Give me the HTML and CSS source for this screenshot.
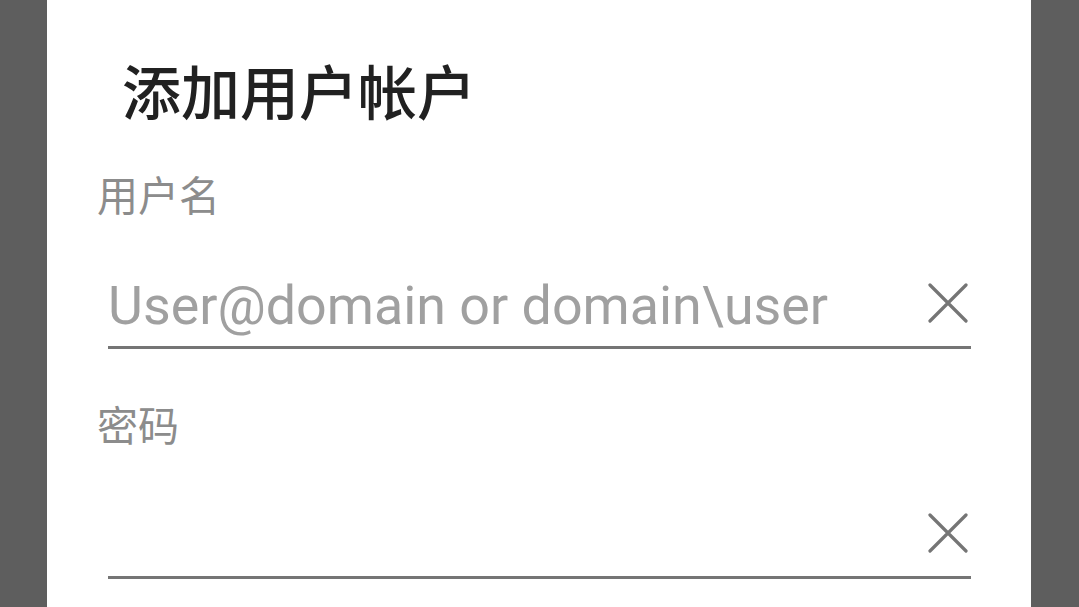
FILE: index.html
```html
<!DOCTYPE html>
<html lang="zh-CN">
<head>
    <meta charset="UTF-8">
    <meta name="viewport" content="width=device-width, initial-scale=1.0">
    <title>添加用户帐户</title>
    <link rel="stylesheet" href="styles.css">
</head>
<body>
    <div class="dialog">
        <h2 class="title">添加用户帐户</h2>

        <label class="label" for="username">用户名</label>
        <div class="input-row">
            <input type="text" id="username" placeholder="User@domain or domain\user">
            <span class="clear">
                <svg width="40" height="40" viewBox="0 0 40 40"><path d="M2 2 L38 38 M38 2 L2 38" stroke="#757575" stroke-width="3.2" stroke-linecap="round" fill="none"/></svg>
            </span>
        </div>

        <label class="label second" for="password">密码</label>
        <div class="input-row">
            <input type="password" id="password">
            <span class="clear">
                <svg width="40" height="40" viewBox="0 0 40 40"><path d="M2 2 L38 38 M38 2 L2 38" stroke="#757575" stroke-width="3.2" stroke-linecap="round" fill="none"/></svg>
            </span>
        </div>
    </div>
</body>
</html>
```

FILE: styles.css
```css
body {
    font-family: Roboto, "Noto Sans CJK SC", sans-serif;
    background-color: #5e5e5e;
    margin: 0;
    height: 100vh;
    overflow: hidden;
}

.dialog {
    background: #fff;
    margin: 0 48px 0 47px;
    height: 100%;
    padding: 0 60px 0 50px;
    box-sizing: border-box;
}

.title {
    margin: 0;
    padding: 57px 0 0 25px;
    font-size: 59px;
    font-weight: 500;
    line-height: 76px;
    color: #212121;
}

.label {
    display: block;
    font-size: 41px;
    line-height: 56px;
    color: #8c8c8c;
    margin-top: 36px;
}

.label.second {
    margin-top: 50px;
}

.input-row {
    display: flex;
    align-items: center;
    margin-left: 11px;
    padding-top: 34px;
    border-bottom: 3px solid #757575;
    height: 124px;
    box-sizing: border-box;
}

.input-row input {
    flex: 1;
    min-width: 0;
    border: none;
    outline: none;
    padding: 0;
    margin-top: 5px;
    font-family: Roboto, sans-serif;
    font-size: 53.8px;
    color: #212121;
    background: transparent;
}

.input-row input::placeholder {
    color: #a0a0a0;
}

.clear {
    display: flex;
    width: 40px;
    height: 40px;
    margin-right: 3px;
}
```
